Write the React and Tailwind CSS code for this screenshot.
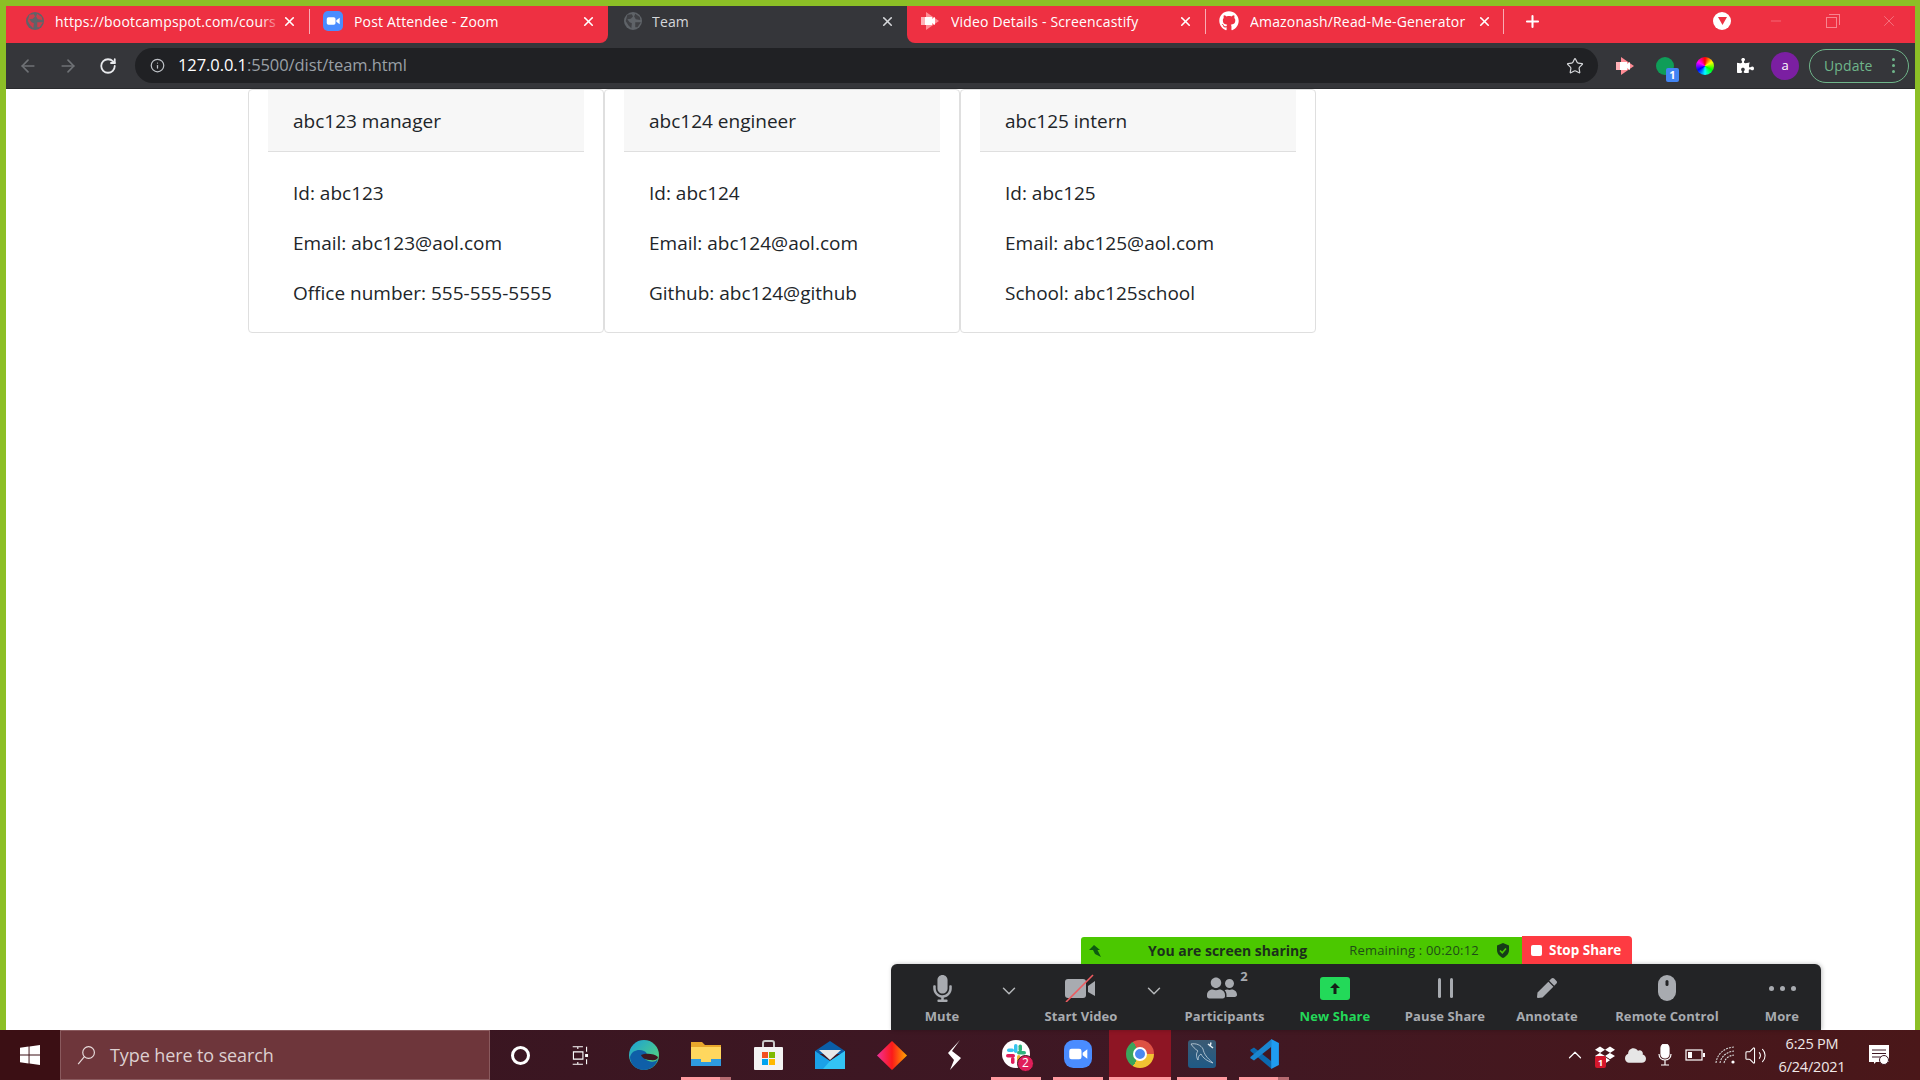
import React from "react";
import { X, Plus, ArrowLeft, ArrowRight, RotateCw, Info, Star, Minus, ChevronDown, ChevronUp, Volume2 } from "lucide-react";
import { FaGithub, FaPuzzlePiece, FaMicrophone, FaUserFriends, FaPen, FaDropbox, FaCloud } from "react-icons/fa";

const ui = { fontFamily: '"Open Sans", "Liberation Sans", sans-serif' };

const Globe = ({ land = "#ee3042" }) => (
  <svg className="shrink-0" width="18" height="18" viewBox="0 0 16 16">
    <circle cx="8" cy="8" r="8" fill="#5f6368" />
    <path d="M3 2.5 L7 2 L8 4 L6 6 L3 6.5 L5 9 L7 10 L6.5 14.5 L4 12 L1.5 8 Z M10 1.5 L14 4.5 L14.5 7 L10.5 6.5 L9 4 Z M10 9 L15 9 L12 13.5 L10 13.5 Z" fill={land} fillOpacity="0.75" />
  </svg>
);

const ZoomMark = ({ size = 20, rx = 6 }) => (
  <svg className="shrink-0" width={size} height={size} viewBox="0 0 24 24">
    <rect width="24" height="24" rx={rx} fill="#4a8cff" />
    <rect x="4.5" y="7.5" width="10.5" height="9" rx="2" fill="#fff" />
    <path d="M16 11 L20 8 V16 L16 13 Z" fill="#fff" />
  </svg>
);

const CastMark = ({ size = 20 }) => (
  <svg className="shrink-0" width={size} height={size} viewBox="0 0 20 20">
    <path d="M6 1 L19 10 L6 19 Z" fill="#ff8d96" />
    <rect x="1" y="6" width="11" height="8" fill="#ffb1b7" />
    <rect x="5" y="6" width="7" height="8" fill="#fff" />
    <path d="M12 8 L15 6 V14 L12 12 Z" fill="#fff" />
  </svg>
);

const tabs = [
  { title: "https://bootcampspot.com/cours", icon: <Globe />, w: "w-[304px]", pl: "pl-[21px]", gap: "mr-[12px]", pr: "pr-[12px]", sep: true, fade: true },
  { title: "Post Attendee - Zoom", icon: <ZoomMark />, w: "w-[298px]", pl: "pl-[15px]", gap: "mr-[13px]", pr: "pr-[12px]", round: "rounded-br-lg" },
  { title: "Team", icon: <Globe land="#35363a" />, w: "w-[299px]", pl: "pl-[17px]", gap: "mr-[11px]", pr: "pr-[12px]", active: true },
  { title: "Video Details - Screencastify", icon: <CastMark />, w: "w-[299px]", pl: "pl-[15px]", gap: "mr-[13px]", pr: "pr-[12px]", sep: true, round: "rounded-bl-lg" },
  { title: "Amazonash/Read-Me-Generator", icon: <FaGithub className="shrink-0" size={20} color="#fff" />, w: "w-[298px]", pl: "pl-[15px]", gap: "mr-[13px]", pr: "pr-[11px]", sep: true },
];

const Tab = ({ tab }) => (
  <div className={`${tab.w} ${tab.active ? "bg-[#35363a] text-[#d5d7da]" : "bg-[#ee3042] text-white"} ${tab.round || ""} ${tab.pl} flex h-full items-center pb-[7px]`}>
    <span className={`${tab.gap} flex w-4 shrink-0 justify-center`}>{tab.icon}</span>
    <span className="relative min-w-0 flex-1 overflow-hidden whitespace-nowrap text-[14px] tracking-[0.17px]">
      {tab.title}
      {tab.fade && <span className="absolute inset-y-0 right-0 w-[22px] bg-gradient-to-r from-transparent to-[#ee3042]" />}
    </span>
    <span className={`${tab.pr} shrink-0`}>
      <X size={15} strokeWidth={2.6} />
    </span>
    {tab.sep && <span className="h-[25px] w-px shrink-0 bg-white/60" />}
  </div>
);

const people = [
  { title: "abc123 manager", rows: ["Id: abc123", "Email: abc123@aol.com", "Office number: 555-555-5555"] },
  { title: "abc124 engineer", rows: ["Id: abc124", "Email: abc124@aol.com", "Github: abc124@github"] },
  { title: "abc125 intern", rows: ["Id: abc125", "Email: abc125@aol.com", "School: abc125school"] },
];

const Card = ({ person }) => (
  <div className="rounded-[4px] border border-[#dfdfdf] px-[19px] pb-[14px]">
    <div className="flex h-[62px] items-center border-b border-[#dfdfdf] bg-[#f7f7f7] px-[25px] pt-[2px]">{person.title}</div>
    <div className="px-[25px] pt-[16px]">
      {person.rows.map((row) => (
        <div key={row} className="flex h-[50px] items-center">
          {row}
        </div>
      ))}
    </div>
  </div>
);

const ToolButton = ({ w, label, icon, green, extra }) => (
  <div className={`${w} ${extra || ""} flex h-full shrink-0 flex-col items-center`}>
    <div className="flex h-[43px] items-center justify-center pt-[5px]">{icon}</div>
    <div className={`whitespace-nowrap text-[13px] font-bold leading-[18px] tracking-[0.1px] ${green ? "text-[#23d959]" : "text-[#a8abb0]"}`}>{label}</div>
  </div>
);

const Chevron = ({ w }) => (
  <div className={`${w} flex h-full shrink-0 justify-center pt-[16px]`}>
    <ChevronDown size={22} strokeWidth={1.6} color="#b5b7ba" />
  </div>
);

const ZoomBar = () => (
  <div className="absolute left-[891px] top-[936px] z-10 w-[930px] text-[#a8abb0]" style={ui}>
    <div className="ml-[190px] flex h-[28px] w-[551px] items-center">
      <div className="flex h-[27px] w-[441px] items-center self-end rounded-tl-[3px] bg-[#4bc800]">
        <svg className="ml-[7px] shrink-0" width="14" height="14" viewBox="0 0 14 14">
          <path d="M6 1 L12 6 H9.5 L13 13 L7 10 L5 6 H1 Z" fill="#0d5a10" />
        </svg>
        <span className="ml-[46px] whitespace-nowrap text-[14px] font-bold text-[#1b2f1c]">You are screen sharing</span>
        <span className="ml-[42px] whitespace-nowrap text-[13px] tracking-[0.2px] text-[#1f4d17]">Remaining : 00:20:12</span>
        <svg className="ml-[17px] shrink-0" width="14" height="15" viewBox="0 0 14 15">
          <path d="M7 0 L13 2.5 V7 C13 11 10 13.5 7 15 C4 13.5 1 11 1 7 V2.5 Z" fill="#163d18" />
          <path d="M4 7.5 L6.3 9.8 L10 5.5" stroke="#4bc800" strokeWidth="1.6" fill="none" />
        </svg>
      </div>
      <div className="flex h-[28px] w-[110px] items-center rounded-tr-[4px] bg-[#fe3b42] pl-[9px] text-[13.5px] font-bold text-white">
        <span className="mr-[7px] h-[11px] w-[11px] rounded-[2px] bg-white" />
        Stop Share
      </div>
    </div>
    <div className="flex h-[66px] rounded-t-[6px] bg-[#232426] shadow-[1px_0_4px_rgba(0,0,0,0.25)]">
      <ToolButton w="w-[102px]" label="Mute" icon={<FaMicrophone size={27} color="#a8abb0" />} />
      <Chevron w="w-[32px]" />
      <ToolButton
        w="w-[112px]"
        label="Start Video"
        icon={
          <svg width="32" height="28" viewBox="0 0 32 28">
            <rect x="0" y="5" width="21" height="19" rx="3" fill="#a8abb0" />
            <path d="M23 12 L30 7 V22 L23 18 Z" fill="#a8abb0" />
            <path d="M1 28 L28 1" stroke="#ee5a5f" strokeWidth="1.6" />
          </svg>
        }
      />
      <Chevron w="w-[34px]" />
      <ToolButton
        w="w-[106px]"
        extra="pl-[1px]"
        label="Participants"
        icon={
          <span className="ml-[6px] flex items-start">
            <FaUserFriends size={30} color="#a8abb0" />
            <span className="ml-[3px] mt-[-5px] text-[13px] font-bold leading-[16px]">2</span>
          </span>
        }
      />
      <ToolButton
        w="w-[116px]"
        label="New Share"
        green
        icon={
          <span className="flex h-[23px] w-[30px] items-center justify-center rounded-[3px] bg-[#23d959]">
            <svg width="12" height="13" viewBox="0 0 12 13">
              <path d="M6 1 L11 6 H7.5 V12 H4.5 V6 H1 Z" fill="#152018" />
            </svg>
          </span>
        }
      />
      <ToolButton
        w="w-[104px]"
        label="Pause Share"
        icon={
          <span className="flex gap-[9px]">
            <span className="h-[20px] w-[3px] rounded-full bg-[#a8abb0]" />
            <span className="h-[20px] w-[3px] rounded-full bg-[#a8abb0]" />
          </span>
        }
      />
      <ToolButton w="w-[100px]" label="Annotate" icon={<FaPen size={20} color="#a8abb0" />} />
      <ToolButton
        w="w-[140px]"
        label="Remote Control"
        icon={
          <svg width="18" height="26" viewBox="0 0 18 26">
            <rect width="18" height="26" rx="9" fill="#a8abb0" />
            <rect x="7.5" y="5" width="3" height="6" rx="1.5" fill="#232426" />
          </svg>
        }
      />
      <ToolButton
        w="w-[84px]"
        extra="pl-[6px]"
        label="More"
        icon={
          <span className="flex gap-[6px]">
            <span className="h-[5px] w-[5px] rounded-full bg-[#a8abb0]" />
            <span className="h-[5px] w-[5px] rounded-full bg-[#a8abb0]" />
            <span className="h-[5px] w-[5px] rounded-full bg-[#a8abb0]" />
          </span>
        }
      />
    </div>
  </div>
);

const EdgeIcon = () => (
  <svg width="30" height="30" viewBox="0 0 30 30">
    <defs>
      <linearGradient id="edgeTop" x1="0" y1="0" x2="1" y2="1">
        <stop offset="0" stopColor="#1a9fd8" />
        <stop offset="1" stopColor="#5fdc6e" />
      </linearGradient>
    </defs>
    <circle cx="15" cy="15" r="15" fill="url(#edgeTop)" />
    <path d="M1 17 C3 10 10 9 15 11 C19 13 19 17 16 19 C21 23 27 22 29 19 C27 26 21 30 15 30 C7 30 1 24 1 17 Z" fill="#0f5fa8" />
    <path d="M12 15 C16 13 25 13 29 17 C29 19 26 21 22 20 C17 20 13 18 12 15 Z" fill="#3d1720" />
  </svg>
);

const ExplorerIcon = () => (
  <svg width="30" height="26" viewBox="0 0 30 26">
    <path d="M0 1 H11 L14 4 H30 V25 H0 Z" fill="#e8a72c" />
    <rect x="0" y="6" width="30" height="19" fill="#ffd75e" />
    <rect x="0" y="18" width="30" height="7" fill="#2f9be0" />
    <rect x="10" y="16" width="10" height="5" fill="#ffd75e" />
  </svg>
);

const StoreIcon = () => (
  <svg width="29" height="30" viewBox="0 0 29 30">
    <path d="M9 8 V3 Q9 1 11 1 H18 Q20 1 20 3 V8" fill="none" stroke="#c9c9c9" strokeWidth="2" />
    <rect x="0" y="7" width="29" height="23" rx="1" fill="#f3f3f3" />
    <rect x="8" y="12" width="6" height="6" fill="#f25022" />
    <rect x="15" y="12" width="6" height="6" fill="#7fba00" />
    <rect x="8" y="19" width="6" height="6" fill="#00a4ef" />
    <rect x="15" y="19" width="6" height="6" fill="#ffb900" />
  </svg>
);

const MailIcon = () => (
  <svg width="30" height="28" viewBox="0 0 30 28">
    <path d="M0 10 L15 0 L30 10 V13 H0 Z" fill="#0a5ea8" />
    <path d="M4 9 H26 L15 19 Z" fill="#e8e8e8" />
    <path d="M0 10 L15 20 L30 10 V28 H0 Z" fill="#1ba1e8" />
    <path d="M15 20 L30 10 V28 H8 Z" fill="#33c4f5" />
  </svg>
);

const DiamondIcon = () => (
  <svg width="30" height="29" viewBox="0 0 30 29">
    <defs>
      <linearGradient id="diamond" x1="0" y1="0" x2="1" y2="0">
        <stop offset="0" stopColor="#f0309a" />
        <stop offset="0.5" stopColor="#fb1a1a" />
        <stop offset="1" stopColor="#ffa800" />
      </linearGradient>
    </defs>
    <path d="M15 0 L30 14.5 L15 29 L0 14.5 Z" fill="url(#diamond)" />
  </svg>
);

const BoltIcon = () => (
  <svg width="13" height="30" viewBox="0 0 13 30">
    <path d="M12 0 L4 11 L13 18 L2 30 L6 20 L0 13 Z" fill="#fff" />
  </svg>
);

const SlackIcon = () => (
  <span className="relative block h-[28px] w-[28px]">
    <svg width="28" height="28" viewBox="0 0 28 28">
      <circle cx="14" cy="14" r="14" fill="#fff" />
      <rect x="12" y="4" width="3.5" height="9" rx="1.75" fill="#36c5f0" />
      <rect x="15" y="11" width="9" height="3.5" rx="1.75" fill="#2eb67d" />
      <rect x="4" y="14" width="9" height="3.5" rx="1.75" fill="#e01e5a" />
      <rect x="5" y="8.5" width="7" height="3.5" rx="1.75" fill="#36c5f0" />
      <rect x="16.5" y="4.5" width="3.5" height="7" rx="1.75" fill="#2eb67d" />
      <rect x="9" y="17" width="3.5" height="7" rx="1.75" fill="#e01e5a" />
      <rect x="15" y="15" width="3.5" height="7" rx="1.75" fill="#ecb22e" />
    </svg>
    <span className="absolute left-[15px] top-[15px] flex h-[17px] w-[17px] items-center justify-center rounded-full border border-[#3d1720] bg-[#e01e5a] text-[12px] leading-none text-white">2</span>
  </span>
);

const ChromeIcon = () => (
  <span className="relative block h-[28px] w-[28px]">
    <span className="block h-full w-full rounded-full bg-[conic-gradient(from_330deg,#dd5144_0deg_120deg,#f1c232_120deg_240deg,#3ba55c_240deg_360deg)]" />
    <span className="absolute left-[7px] top-[7px] h-[14px] w-[14px] rounded-full border-2 border-white bg-[#4b89f0]" />
  </span>
);

const MysqlIcon = () => (
  <svg width="28" height="28" viewBox="0 0 28 28">
    <defs>
      <linearGradient id="mysqlBg" x1="0" y1="0" x2="0" y2="1">
        <stop offset="0" stopColor="#3b5a73" />
        <stop offset="1" stopColor="#1f5a86" />
      </linearGradient>
    </defs>
    <rect width="28" height="28" rx="3" fill="url(#mysqlBg)" />
    <path d="M3 4 C8 3 13 5 15 9 C16 14 19 18 25 23 C19 21 15 18 13 14 C11 15 10 17 10 20 C8 17 8 13 10 11 C7 9 5 7 3 4 Z" fill="none" stroke="#c8d6e0" strokeWidth="0.8" />
    <path d="M20 4 L25 8 M23 2.5 L22 6.5" stroke="#e8eef2" strokeWidth="1.5" />
  </svg>
);

const VscodeIcon = () => (
  <svg width="31" height="30" viewBox="0 0 100 100">
    <path d="M72 98 V73 L15 28 L3 36 V40 Z" fill="#0b69b0" />
    <path d="M72 2 V27 L15 72 L3 64 V60 Z" fill="#1a86d0" />
    <path d="M72 0 L98 13 V87 L72 100 Z" fill="#1f9cf0" />
  </svg>
);

const taskIcons = [
  { icon: <ExplorerIcon />, bar: "split" },
  { icon: <StoreIcon /> },
  { icon: <MailIcon /> },
  { icon: <DiamondIcon /> },
  { icon: <BoltIcon /> },
  { icon: <SlackIcon />, bar: "on" },
  { icon: <ZoomMark size={28} rx={8} />, bar: "on" },
  { icon: <ChromeIcon />, bar: "on", active: true },
  { icon: <MysqlIcon />, bar: "on" },
  { icon: <VscodeIcon />, bar: "split" },
];

const TaskCell = ({ item }) => (
  <div className={`flex h-full w-[62px] shrink-0 flex-col ${item.active ? "bg-[#8e1524]" : ""}`}>
    <div className="flex flex-1 items-center justify-center">{item.icon}</div>
    {item.bar === "on" && <div className={`h-[3px] bg-[#ff9aa0] ${item.active ? "" : "mx-[6px]"}`} />}
    {item.bar === "split" && (
      <div className="mx-[6px] flex h-[3px]">
        <div className="flex-1 bg-[#ff9aa0]" />
        <div className="w-[11px] bg-[#b56a70]" />
      </div>
    )}
  </div>
);

const Taskbar = () => (
  <div className="flex h-[50px] w-full shrink-0 items-stretch bg-[linear-gradient(90deg,#37141f,#3f1824_60%,#4a1719)]" style={ui}>
    <div className="flex w-[60px] shrink-0 items-center justify-center bg-[#3b0f14]">
      <svg width="20" height="20" viewBox="0 0 21 21" fill="#fff">
        <path d="M0 3 L9 1.7 V10 H0 Z M10 1.5 L21 0 V10 H10 Z M0 11 H9 V19.3 L0 18 Z M10 11 H21 V21 L10 19.5 Z" />
      </svg>
    </div>
    <div className="flex w-[430px] shrink-0 items-center border border-[#8a5a5e] bg-[#6e363b] pl-[15px]">
      <svg width="21" height="20" viewBox="0 0 22 24" fill="none" stroke="#e8dcdc" strokeWidth="1.4">
        <circle cx="13.5" cy="9" r="7" />
        <path d="M8.5 14 L1 23" />
      </svg>
      <span className="ml-[13px] text-[18px] tracking-[-0.1px] text-[#ddcfd0]">Type here to search</span>
    </div>
    <div className="flex w-[60px] shrink-0 items-center justify-center">
      <span className="h-[19px] w-[19px] rounded-full border-[3px] border-white" />
    </div>
    <div className="flex w-[63px] shrink-0 items-center justify-center pr-[3px]">
      <svg width="20" height="19" viewBox="0 0 22 26" fill="none" stroke="#fff" strokeWidth="1.5">
        <path d="M1 1 H15 M1 25 H15 M2 8 H15 V18 H2 Z M8 1 V4 M8 22 V25" />
        <path d="M20 1 V8 M20 18 V25" />
        <rect x="18" y="11" width="4" height="4" fill="#fff" stroke="none" />
      </svg>
    </div>
    <div className="flex w-[62px] shrink-0 items-center justify-center">
      <EdgeIcon />
    </div>
    {taskIcons.map((item, i) => (
      <TaskCell key={i} item={item} />
    ))}
    <div className="flex flex-1 items-center justify-end pr-[16px] text-white">
      <div className="flex w-[30px] justify-center">
        <ChevronUp size={22} strokeWidth={1.3} />
      </div>
      <div className="relative flex w-[30px] justify-center">
        <FaDropbox size={20} />
        <span className="absolute bottom-[-3px] left-[5px] flex h-[12px] w-[11px] items-center justify-center rounded-[2px] bg-[#d5172b] text-[9px] font-bold leading-none">1</span>
      </div>
      <div className="flex w-[30px] justify-center">
        <FaCloud size={21} color="#e6e6e6" />
      </div>
      <div className="flex w-[30px] justify-center">
        <svg width="14" height="22" viewBox="0 0 14 22" fill="none" stroke="#fff" strokeWidth="1.2">
          <rect x="3" y="0" width="8" height="14" rx="4" fill="#fff" />
          <path d="M1 10 C1 18 13 18 13 10 M7 16 V21 M3 21 H11" />
        </svg>
      </div>
      <div className="flex w-[30px] justify-center">
        <svg width="20" height="12" viewBox="0 0 20 12" fill="none" stroke="#fff" strokeWidth="1.2">
          <rect x="1" y="1" width="16" height="10" />
          <rect x="3" y="3" width="4" height="6" fill="#fff" stroke="none" />
          <rect x="18" y="4" width="2" height="4" fill="#fff" stroke="none" />
        </svg>
      </div>
      <div className="flex w-[30px] justify-center">
        <svg width="20" height="18" viewBox="0 0 20 18" fill="none" stroke="#d9d9d9" strokeWidth="1.1">
          <path d="M1 17 C2 8 9 2 19 1 M5 17 C6 11 11 6 19 5 M9 17 C10 13 13 10 19 9" strokeDasharray="2 1" />
          <circle cx="18" cy="16" r="1.6" fill="#fff" stroke="none" />
        </svg>
      </div>
      <div className="flex w-[30px] justify-center">
        <Volume2 size={23} strokeWidth={1.1} />
      </div>
      <div className="flex w-[84px] flex-col items-center text-[14.5px] leading-[23px] tracking-[-0.2px] text-[#f0e8e8]">
        <span>6:25 PM</span>
        <span>6/24/2021</span>
      </div>
      <div className="flex w-[50px] justify-center">
        <svg width="21" height="20" viewBox="0 0 21 20">
          <path d="M0 0 H20 V17 H7 L5 19 V17 H0 Z" fill="#fff" />
          <path d="M3 5 H17 M3 8.5 H17 M3 12 H12" stroke="#3f1824" strokeWidth="1" />
          <circle cx="15" cy="15" r="4.5" fill="#fff" stroke="#3f1824" />
        </svg>
      </div>
    </div>
  </div>
);

const App = () => {
  return (
    <div className="relative flex h-[1080px] w-[1920px] flex-col overflow-hidden bg-[#8cbf26]">
      <div className="flex min-h-0 flex-1 flex-col pl-[6px] pr-[5px] pt-[6px]" style={ui}>
        <div className="flex h-[37px] shrink-0 items-stretch bg-[#ee3042]">
          <div className="flex bg-[#35363a]">
            {tabs.map((tab) => (
              <Tab key={tab.title} tab={tab} />
            ))}
          </div>
          <div className="flex w-[57px] items-center justify-center pb-[7px] text-white">
            <Plus size={19} strokeWidth={2.6} />
          </div>
          <div className="flex flex-1 items-center pb-[7px]">
            <span className="ml-[152px] flex h-[18px] w-[18px] items-center justify-center rounded-full bg-white">
              <svg width="9" height="8" viewBox="0 0 9 8">
                <path d="M0 0 H9 L4.5 8 Z" fill="#ee3042" />
              </svg>
            </span>
            <span className="ml-[37px] text-[#f7848f]">
              <Minus size={16} strokeWidth={1} />
            </span>
            <span className="relative ml-[42px] mt-[2px] h-[11px] w-[11px] border border-[#f7848f]">
              <span className="absolute left-[2px] top-[-4px] h-[11px] w-[11px] border-r border-t border-[#f7848f]" />
            </span>
            <span className="ml-[43px] text-[#f7848f]">
              <X size={18} strokeWidth={1} />
            </span>
          </div>
        </div>

        <div className="flex h-[46px] shrink-0 items-center border-b border-[#2a2b2e] bg-[#35363a]">
          <div className="flex w-[129px] shrink-0 items-center pl-[12px]">
            <ArrowLeft size={20} color="#6f7276" />
            <ArrowRight className="ml-[20px]" size={20} color="#6f7276" />
            <RotateCw className="ml-[21px]" size={18} strokeWidth={2.4} color="#e8eaed" />
          </div>
          <div className="flex h-[35px] w-[1463px] shrink-0 items-center rounded-full bg-[#202124] pl-[15px]">
            <Info size={15} color="#bdc1c6" />
            <span className="ml-[13px] text-[16.5px] tracking-[-0.08px] text-white">
              127.0.0.1<span className="text-[#9aa0a6]">:5500/dist/team.html</span>
            </span>
            <Star className="ml-auto mr-[14px]" size={18} strokeWidth={1.6} color="#d5d7da" />
          </div>
          <div className="flex flex-1 items-center">
            <span className="ml-[17px] flex w-[20px] justify-center">
              <CastMark size={20} />
            </span>
            <span className="relative ml-[21px] block h-[18px] w-[18px] rounded-full bg-[#0f9d58]">
              <span className="absolute left-[10px] top-[11px] flex h-[14px] w-[13px] items-center justify-center rounded-[2px] bg-[#4285f4] text-[11px] font-bold leading-none text-white">1</span>
            </span>
            <span className="ml-[22px] h-[18px] w-[18px] rounded-full bg-[conic-gradient(#ff0000,#ffff00,#00ff00,#00ffff,#0000ff,#ff00ff,#ff0000)]" />
            <span className="ml-[23px] text-white">
              <FaPuzzlePiece size={17} />
            </span>
            <span className="ml-[17px] flex h-[28px] w-[28px] items-center justify-center rounded-full bg-[#7b1fa2] text-[13px] text-white">a</span>
            <span className="ml-[10px] flex h-[34px] w-[100px] items-center rounded-full border border-[#6fb58a] pl-[14px] text-[14px] tracking-[0.1px] text-[#6fb58a]">
              Update
              <span className="ml-[19px] flex flex-col gap-[3px]">
                <span className="h-[3px] w-[3px] rounded-full bg-[#6fb58a]" />
                <span className="h-[3px] w-[3px] rounded-full bg-[#6fb58a]" />
                <span className="h-[3px] w-[3px] rounded-full bg-[#6fb58a]" />
              </span>
            </span>
          </div>
        </div>

        <div className="min-h-0 flex-1 bg-white pl-[242px] text-[19px] text-[#212529]">
          <div className="grid w-[1068px] grid-cols-3">
            {people.map((person) => (
              <Card key={person.title} person={person} />
            ))}
          </div>
        </div>
      </div>
      <Taskbar />
      <ZoomBar />
    </div>
  );
};

export default App;
